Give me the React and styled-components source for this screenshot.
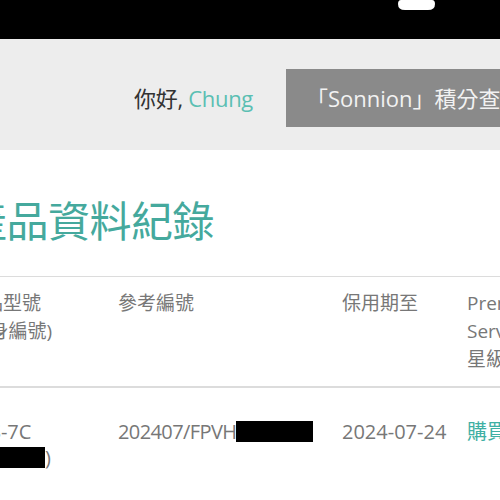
import React from "react";
import styled, { createGlobalStyle } from "styled-components";

const GlobalStyle = createGlobalStyle`
  body {
    margin: 0;
    overflow: hidden;
    background: #fff;
    font-family: "Open Sans", "Noto Sans CJK TC", sans-serif;
  }
`;

const headers = [
  ["產品型號", "(機身編號)"],
  ["參考編號"],
  ["保用期至"],
  ["Premium Service 星級服務"],
];

const App = () => {
  return (
    <>
      <GlobalStyle />
      <TopBar>
        <UserIcon viewBox="0 0 37 11">
          <path d="M3 0 H34 Q37 0 37 4 Q37 10 30 10 H7 Q0 10 0 4 Q0 0 3 0 Z" fill="#fff" />
        </UserIcon>
      </TopBar>
      <UserBar>
        <Greeting>
          你好, <Name>Chung</Name>
        </Greeting>
        <PointsButton>「Sonnion」積分查詢</PointsButton>
      </UserBar>
      <Main>
        <Title>產品資料紀錄</Title>
        <Table>
          <Row $head>
            {headers.map((lines, i) => (
              <Cell key={i}>
                {lines.map((l, j) => (
                  <React.Fragment key={j}>
                    {j > 0 && <br />}
                    {l}
                  </React.Fragment>
                ))}
              </Cell>
            ))}
          </Row>
          <Row>
            <Cell>
              RCS-7C
              <br />
              <Redacted $w={80} />)
            </Cell>
            <Cell>
              <Ref>202407/FPVH</Ref>
              <Redacted $w={77} />
            </Cell>
            <Cell>2024-07-24</Cell>
            <Cell>
              <Link>購買服務</Link>
            </Cell>
          </Row>
        </Table>
      </Main>
    </>
  );
};

const TopBar = styled.header`
  height: 39px;
  background: #000;
  display: flex;
  align-items: flex-start;
  padding-left: 398px;
`;

const UserIcon = styled.svg`
  width: 37px;
  height: 11px;
  display: block;
`;

const UserBar = styled.div`
  height: 111px;
  box-sizing: border-box;
  background: #ededed;
  display: flex;
  align-items: flex-start;
  padding-top: 30px;
  font-size: 22px;
  white-space: nowrap;
`;

const Greeting = styled.div`
  width: 253px;
  flex-shrink: 0;
  text-align: right;
  line-height: 58px;
  color: #333;
  letter-spacing: -0.3px;
`;

const Name = styled.span`
  color: #5bbfb3;
`;

const PointsButton = styled.div`
  flex-shrink: 0;
  margin-left: 33px;
  height: 58px;
  line-height: 58px;
  padding: 0 22px 0 20px;
  background: #8a8a8a;
  color: #f2f2f2;
`;

const Main = styled.main`
  margin-left: -35px;
  width: 800px;
`;

const Title = styled.h1`
  margin: 46px 0 0;
  font-size: 42px;
  line-height: 50px;
  font-weight: 400;
  color: #45a99d;
  letter-spacing: -0.5px;
`;

const Table = styled.div`
  margin-top: 30px;
  border-top: 1px solid #dcdcdc;
`;

const Row = styled.div`
  display: grid;
  grid-template-columns: 153px 224px 125px 85px;
  padding: ${({ $head }) => ($head ? "12px 0 13px" : "31px 0 12px")};
  border-bottom: ${({ $head }) => ($head ? "2px solid #dcdcdc" : "none")};
  font-size: ${({ $head }) => ($head ? "19px" : "20px")};
  line-height: ${({ $head }) => ($head ? "28px" : "26px")};
  color: #777;
`;

const Cell = styled.div`
  white-space: normal;
`;

const Ref = styled.span`
  letter-spacing: -0.6px;
`;

const Redacted = styled.span`
  display: inline-block;
  width: ${({ $w }) => $w}px;
  height: 21px;
  background: #000;
  vertical-align: -3px;
`;

const Link = styled.span`
  color: #3fb0a4;
  white-space: nowrap;
`;

export default App;
